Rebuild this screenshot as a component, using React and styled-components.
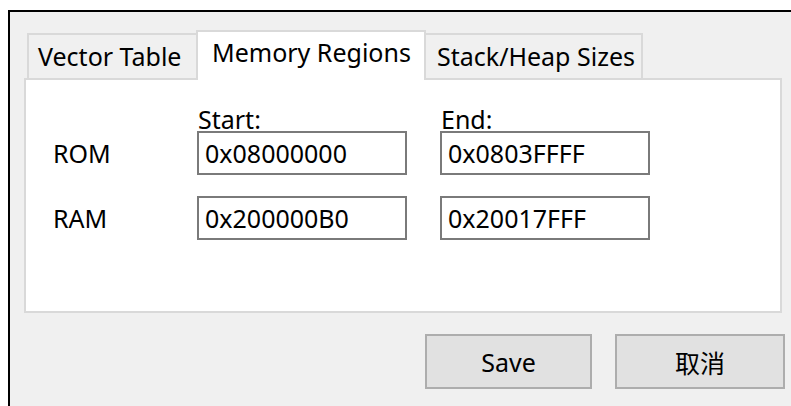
import React from "react";
import styled, { createGlobalStyle } from "styled-components";

const Global = createGlobalStyle`
  html, body { margin: 0; padding: 0; background: #ffffff; }
  body { font-family: "Noto Sans", "Noto Sans CJK SC", sans-serif; color: #000; }
`;

const Window = styled.div`
  margin: 10px 0 0 8px;
  height: 396px;
  box-sizing: border-box;
  border-top: 2px solid #000;
  border-left: 2px solid #000;
  background: #f0f0f0;
  padding: 18px 7px 0 14px;
  display: flex;
  flex-direction: column;
`;

const TabStrip = styled.div`
  display: flex;
  align-items: flex-end;
  padding-left: 3px;
  position: relative;
  z-index: 1;
  margin-bottom: -2px;
`;

const Tab = styled.div`
  box-sizing: border-box;
  width: ${(p) => p.$w}px;
  height: ${(p) => (p.$active ? 50 : 47)}px;
  padding: ${(p) => (p.$active ? "6px 0 0 14px" : "7px 0 0 9px")};
  font-size: 25px;
  line-height: 28px;
  background: ${(p) => (p.$active ? "#fff" : "#f0f0f0")};
  border: 2px solid #d9d9d9;
  border-bottom: ${(p) => (p.$active ? "none" : "2px solid #d9d9d9")};
  border-right: ${(p) => (p.$last || p.$active ? "2px solid #d9d9d9" : "none")};
  ${(p) => p.$afterActive && "border-left: none; padding-left: 11px;"}
  white-space: nowrap;
`;

const Panel = styled.div`
  box-sizing: border-box;
  width: 758px;
  height: 235px;
  background: #fff;
  border: 2px solid #d9d9d9;
  padding: 23px 0 0 27px;
`;

const Grid = styled.div`
  display: grid;
  grid-template-columns: 111px 210px 210px;
  column-gap: 33px;
  grid-template-rows: 28px 44px 44px;
  align-items: center;
`;

const Header = styled.div`
  box-sizing: border-box;
  height: 28px;
  padding: 2px 0 0 1px;
  font-size: 25px;
  line-height: 28px;
  overflow: visible;
  white-space: nowrap;
`;

const RowLabel = styled.div`
  font-size: 25px;
  line-height: 44px;
  margin-top: ${(p) => p.$mt || 0}px;
`;

const Field = styled.div`
  box-sizing: border-box;
  height: 44px;
  border: 2px solid #7a7a7a;
  background: #fff;
  font-size: 25px;
  line-height: 40px;
  padding-left: 6px;
  margin-top: ${(p) => p.$mt || 0}px;
  white-space: nowrap;
`;

const ButtonRow = styled.div`
  display: flex;
  justify-content: flex-end;
  gap: 23px;
  margin-top: 21px;
  margin-right: -1px;
`;

const Button = styled.div`
  box-sizing: border-box;
  width: ${(p) => p.$w}px;
  height: 55px;
  background: #e1e1e1;
  border: 2px solid #adadad;
  display: flex;
  align-items: center;
  justify-content: center;
  font-size: 25px;
  font-family: ${(p) => (p.$cjk ? '"Noto Sans CJK SC", sans-serif' : '"Noto Sans", sans-serif')};
`;

export default function App() {
  return (
    <>
      <Global />
      <Window>
        <TabStrip>
          <Tab $w={169}>Vector Table</Tab>
          <Tab $w={230} $active>Memory Regions</Tab>
          <Tab $w={217} $last $afterActive>Stack/Heap Sizes</Tab>
        </TabStrip>
        <Panel>
          <Grid>
            <div />
            <Header>Start:</Header>
            <Header>End:</Header>
            <RowLabel>ROM</RowLabel>
            <Field>0x08000000</Field>
            <Field>0x0803FFFF</Field>
            <RowLabel $mt={42}>RAM</RowLabel>
            <Field $mt={42}>0x200000B0</Field>
            <Field $mt={42}>0x20017FFF</Field>
          </Grid>
        </Panel>
        <ButtonRow>
          <Button $w={167}>Save</Button>
          <Button $w={170} $cjk>取消</Button>
        </ButtonRow>
      </Window>
    </>
  );
}
